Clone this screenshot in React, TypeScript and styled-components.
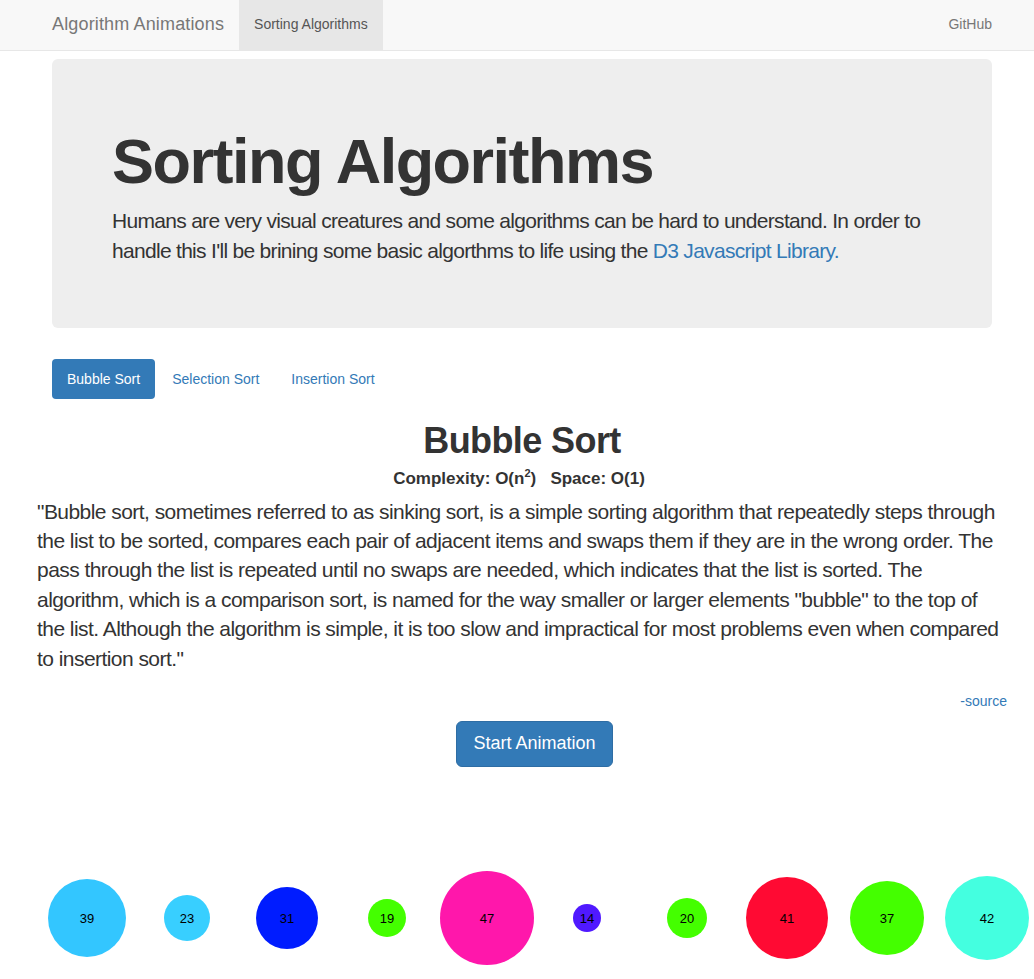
import { createGlobalStyle, styled } from 'styled-components';

const GlobalStyle = createGlobalStyle`
  html, body {
    margin: 0;
    padding: 0;
    overflow: hidden;
  }
  body {
    font-family: 'Liberation Sans', Arial, Helvetica, sans-serif;
    font-size: 14px;
    line-height: 1.42857;
    color: #333;
    background: #fff;
  }
  * {
    box-sizing: border-box;
  }
`;

const link = '#337ab7';

const Navbar = styled.nav`
  height: 51px;
  background: #f8f8f8;
  border-bottom: 1px solid #e7e7e7;
`;

const Container = styled.div`
  width: 940px;
  margin-left: 52px;
`;

const NavInner = styled(Container)`
  display: flex;
  align-items: stretch;
  height: 50px;
`;

const Brand = styled.a`
  display: flex;
  align-items: center;
  padding: 0 15px 0 0;
  font-size: 18px;
  letter-spacing: 0.15px;
  color: #777;
  text-decoration: none;
`;

const NavItem = styled.a<{ active?: boolean }>`
  display: flex;
  align-items: center;
  padding: 0 15px;
  font-size: 14px;
  color: ${({ active }) => (active ? '#555' : '#777')};
  background: ${({ active }) => (active ? '#e7e7e7' : 'transparent')};
  text-decoration: none;
`;

const NavRight = styled.div`
  display: flex;
  margin-left: auto;
  margin-right: -15px;
`;

const Jumbotron = styled.section`
  margin-top: 8px;
  padding: 48px 60px;
  background: #eee;
  border-radius: 6px;

  > h1 {
    margin: 20px 0 10px;
    font-size: 63px;
    font-weight: 700;
    letter-spacing: -1.5px;
    line-height: 1.1;
    color: #333;
  }

  > p {
    margin: 0 0 15px;
    font-size: 21px;
    font-weight: 200;
    line-height: 1.4;
    letter-spacing: -0.7px;
  }

  a {
    color: ${link};
    text-decoration: none;
  }
`;

const Pills = styled.ul`
  display: flex;
  gap: 2px;
  list-style: none;
  margin: 31px 0 0;
  padding: 0;
`;

const Pill = styled.li<{ active?: boolean }>`
  padding: 10px 15px;
  border-radius: 4px;
  font-size: 14px;
  line-height: 20px;
  color: ${({ active }) => (active ? '#fff' : link)};
  background: ${({ active }) => (active ? link : 'transparent')};
`;

const Row = styled.div`
  margin: 0 -15px;
`;

const Title = styled.h1`
  margin: 22px 0 8px;
  font-size: 36px;
  font-weight: 700;
  letter-spacing: -0.6px;
  line-height: 1.1;
  text-align: center;
`;

const Complexity = styled.div`
  padding-right: 6px;
  font-size: 17px;
  font-weight: 700;
  line-height: 20px;
  text-align: center;

  sup {
    font-size: 11px;
    line-height: 0;
  }
`;

const Lead = styled.p`
  margin: 8px 0 18px;
  font-size: 21px;
  font-weight: 300;
  line-height: 1.4;
  letter-spacing: -0.55px;
`;

const Source = styled.div`
  text-align: right;
  font-size: 14px;
  line-height: 20px;

  a {
    color: ${link};
    text-decoration: none;
  }
`;

const ButtonRow = styled.div`
  display: flex;
  justify-content: center;
  padding-left: 25px;
  margin-top: 10px;
`;

const BigButton = styled.button`
  padding: 10px 16px;
  font-family: inherit;
  font-size: 18px;
  line-height: 1.3333;
  color: #fff;
  background: ${link};
  border: 1px solid #2e6da4;
  border-radius: 6px;
  cursor: pointer;
`;

const Chart = styled.svg`
  display: block;
  overflow: visible;

  text {
    font-family: 'Liberation Sans', Arial, sans-serif;
    font-size: 13px;
    fill: #000;
  }
`;

const values = [
  { v: 39, c: '#33c6ff' },
  { v: 23, c: '#38cfff' },
  { v: 31, c: '#001cff' },
  { v: 19, c: '#44ff00' },
  { v: 47, c: '#ff17ab' },
  { v: 14, c: '#5019ff' },
  { v: 20, c: '#44ff00' },
  { v: 41, c: '#ff0a33' },
  { v: 37, c: '#44ff00' },
  { v: 42, c: '#44ffe0' },
];

const App = () => {
  return (
    <>
      <GlobalStyle />
      <Navbar>
        <NavInner>
          <Brand href="#">Algorithm Animations</Brand>
          <NavItem active href="#">
            Sorting Algorithms
          </NavItem>
          <NavRight>
            <NavItem href="#">GitHub</NavItem>
          </NavRight>
        </NavInner>
      </Navbar>
      <Container>
        <Jumbotron>
          <h1>Sorting Algorithms</h1>
          <p>
            Humans are very visual creatures and some algorithms can be hard to
            understand. In order to handle this I'll be brining some basic
            algorthms to life using the <a href="#">D3 Javascript Library.</a>
          </p>
        </Jumbotron>
        <Pills>
          <Pill active>Bubble Sort</Pill>
          <Pill>Selection Sort</Pill>
          <Pill>Insertion Sort</Pill>
        </Pills>
        <Row>
          <Title>Bubble Sort</Title>
          <Complexity>
            Complexity: O(n<sup>2</sup>)&nbsp;&nbsp; Space: O(1)
          </Complexity>
          <Lead>
            "Bubble sort, sometimes referred to as sinking sort, is a simple
            sorting algorithm that repeatedly steps through the list to be
            sorted, compares each pair of adjacent items and swaps them if they
            are in the wrong order. The pass through the list is repeated until
            no swaps are needed, which indicates that the list is sorted. The
            algorithm, which is a comparison sort, is named for the way smaller
            or larger elements "bubble" to the top of the list. Although the
            algorithm is simple, it is too slow and impractical for most
            problems even when compared to insertion sort."
          </Lead>
          <Source>
            <a href="#">-source</a>
          </Source>
          <ButtonRow>
            <BigButton>Start Animation</BigButton>
          </ButtonRow>
          <Chart width={970} height={212}>
            {values.map((d, i) => (
              <g key={i}>
                <circle cx={50 + i * 100} cy={151} r={d.v} fill={d.c} />
                <text x={50 + i * 100} y={156} textAnchor="middle">
                  {d.v}
                </text>
              </g>
            ))}
          </Chart>
        </Row>
      </Container>
    </>
  );
};

export default App;
